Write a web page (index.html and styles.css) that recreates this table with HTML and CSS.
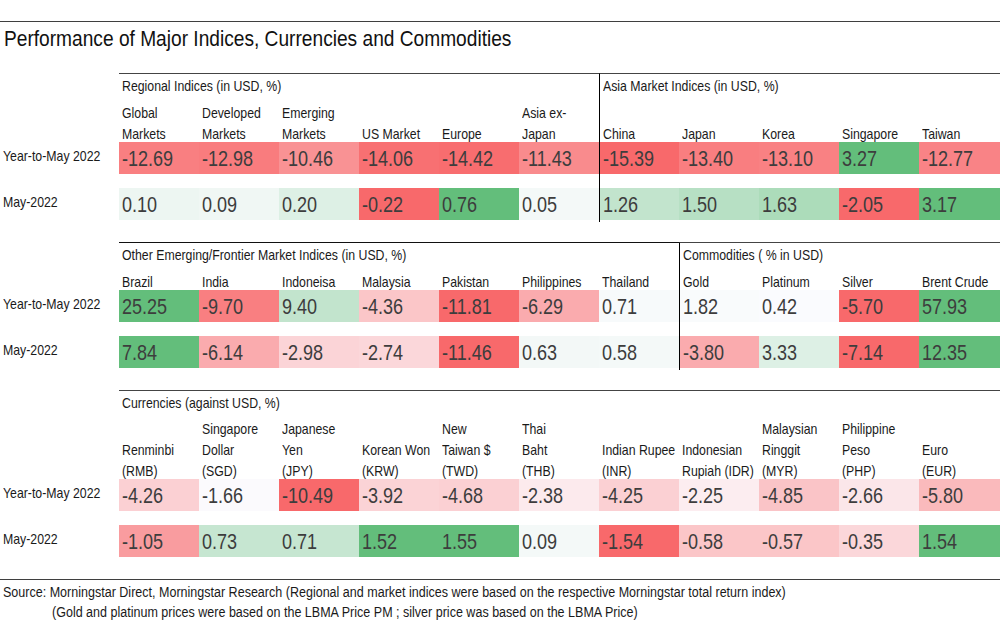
FILE: index.html
```html
<!DOCTYPE html>
<html lang="en">
<head>
<meta charset="utf-8">
<title>Performance of Major Indices, Currencies and Commodities</title>
<link rel="stylesheet" href="styles.css">
</head>
<body>
<div class="page">
  <h1 class="title"><span class="t">Performance of Major Indices, Currencies and Commodities</span></h1>

  <section class="block s1">
    <div class="labels">
      <div class="rl"><span class="t">Year-to-May 2022</span></div>
      <div class="rl r2"><span class="t">May-2022</span></div>
    </div>
    <div class="group c6">
      <div class="gh"><span class="t">Regional Indices (in USD, %)</span></div>
      <div class="ch"><span class="t">Global<br>Markets</span></div>
      <div class="ch"><span class="t">Developed<br>Markets</span></div>
      <div class="ch"><span class="t">Emerging<br>Markets</span></div>
      <div class="ch"><span class="t">US Market</span></div>
      <div class="ch"><span class="t">Europe</span></div>
      <div class="ch"><span class="t">Asia ex-<br>Japan</span></div>
      <div class="n" style="background:rgb(249,127,129)"><span class="t">-12.69</span></div>
      <div class="n" style="background:rgb(249,124,126)"><span class="t">-12.98</span></div>
      <div class="n" style="background:rgb(249,146,148)"><span class="t">-10.46</span></div>
      <div class="n" style="background:rgb(248,112,114)"><span class="t">-14.06</span></div>
      <div class="n" style="background:rgb(248,109,111)"><span class="t">-14.42</span></div>
      <div class="n" style="background:rgb(249,139,141)"><span class="t">-11.43</span></div>
      <div class="n r2" style="background:rgb(237,246,242)"><span class="t">0.10</span></div>
      <div class="n r2" style="background:rgb(240,247,244)"><span class="t">0.09</span></div>
      <div class="n r2" style="background:rgb(221,240,229)"><span class="t">0.20</span></div>
      <div class="n r2" style="background:rgb(248,105,107)"><span class="t">-0.22</span></div>
      <div class="n r2" style="background:rgb(99,190,123)"><span class="t">0.76</span></div>
      <div class="n r2" style="background:rgb(244,249,248)"><span class="t">0.05</span></div>
    </div>
    <div class="group div c5">
      <div class="gh"><span class="t">Asia Market Indices (in USD, %)</span></div>
      <div class="ch"><span class="t">China</span></div>
      <div class="ch"><span class="t">Japan</span></div>
      <div class="ch"><span class="t">Korea</span></div>
      <div class="ch"><span class="t">Singapore</span></div>
      <div class="ch"><span class="t">Taiwan</span></div>
      <div class="n" style="background:rgb(248,105,107)"><span class="t">-15.39</span></div>
      <div class="n" style="background:rgb(249,126,128)"><span class="t">-13.40</span></div>
      <div class="n" style="background:rgb(249,129,131)"><span class="t">-13.10</span></div>
      <div class="n" style="background:rgb(99,190,123)"><span class="t">3.27</span></div>
      <div class="n" style="background:rgb(249,131,134)"><span class="t">-12.77</span></div>
      <div class="n r2" style="background:rgb(194,228,205)"><span class="t">1.26</span></div>
      <div class="n r2" style="background:rgb(183,224,196)"><span class="t">1.50</span></div>
      <div class="n r2" style="background:rgb(172,220,186)"><span class="t">1.63</span></div>
      <div class="n r2" style="background:rgb(248,105,107)"><span class="t">-2.05</span></div>
      <div class="n r2" style="background:rgb(99,190,123)"><span class="t">3.17</span></div>
    </div>
  </section>

  <section class="block s2">
    <div class="labels">
      <div class="rl"><span class="t">Year-to-May 2022</span></div>
      <div class="rl r2"><span class="t">May-2022</span></div>
    </div>
    <div class="group c7 dark">
      <div class="gh"><span class="t">Other Emerging/Frontier Market Indices (in USD, %)</span></div>
      <div class="ch"><span class="t">Brazil</span></div>
      <div class="ch"><span class="t">India</span></div>
      <div class="ch"><span class="t">Indoneisa</span></div>
      <div class="ch"><span class="t">Malaysia</span></div>
      <div class="ch"><span class="t">Pakistan</span></div>
      <div class="ch"><span class="t">Philippines</span></div>
      <div class="ch"><span class="t">Thailand</span></div>
      <div class="n" style="background:rgb(99,190,123)"><span class="t">25.25</span></div>
      <div class="n" style="background:rgb(249,127,129)"><span class="t">-9.70</span></div>
      <div class="n" style="background:rgb(194,228,205)"><span class="t">9.40</span></div>
      <div class="n" style="background:rgb(251,198,200)"><span class="t">-4.36</span></div>
      <div class="n" style="background:rgb(248,105,107)"><span class="t">-11.81</span></div>
      <div class="n" style="background:rgb(250,171,174)"><span class="t">-6.29</span></div>
      <div class="n" style="background:rgb(247,250,251)"><span class="t">0.71</span></div>
      <div class="n r2" style="background:rgb(99,190,123)"><span class="t">7.84</span></div>
      <div class="n r2" style="background:rgb(250,171,174)"><span class="t">-6.14</span></div>
      <div class="n r2" style="background:rgb(251,212,215)"><span class="t">-2.98</span></div>
      <div class="n r2" style="background:rgb(251,215,218)"><span class="t">-2.74</span></div>
      <div class="n r2" style="background:rgb(248,105,107)"><span class="t">-11.46</span></div>
      <div class="n r2" style="background:rgb(243,248,247)"><span class="t">0.63</span></div>
      <div class="n r2" style="background:rgb(244,249,248)"><span class="t">0.58</span></div>
    </div>
    <div class="group div c4">
      <div class="gh"><span class="t">Commodities ( % in USD)</span></div>
      <div class="ch"><span class="t">Gold</span></div>
      <div class="ch"><span class="t">Platinum</span></div>
      <div class="ch"><span class="t">Silver</span></div>
      <div class="ch"><span class="t">Brent Crude</span></div>
      <div class="n" style="background:rgb(249,251,252)"><span class="t">1.82</span></div>
      <div class="n" style="background:rgb(250,251,254)"><span class="t">0.42</span></div>
      <div class="n" style="background:rgb(248,105,107)"><span class="t">-5.70</span></div>
      <div class="n" style="background:rgb(99,190,123)"><span class="t">57.93</span></div>
      <div class="n r2" style="background:rgb(250,171,174)"><span class="t">-3.80</span></div>
      <div class="n r2" style="background:rgb(221,240,229)"><span class="t">3.33</span></div>
      <div class="n r2" style="background:rgb(248,105,107)"><span class="t">-7.14</span></div>
      <div class="n r2" style="background:rgb(99,190,123)"><span class="t">12.35</span></div>
    </div>
  </section>

  <section class="block s3">
    <div class="labels">
      <div class="rl"><span class="t">Year-to-May 2022</span></div>
      <div class="rl r2"><span class="t">May-2022</span></div>
    </div>
    <div class="group c11">
      <div class="gh"><span class="t">Currencies (against USD, %)</span></div>
      <div class="ch"><span class="t">Renminbi<br>(RMB)</span></div>
      <div class="ch"><span class="t">Singapore<br>Dollar<br>(SGD)</span></div>
      <div class="ch"><span class="t">Japanese<br>Yen<br>(JPY)</span></div>
      <div class="ch"><span class="t">Korean Won<br>(KRW)</span></div>
      <div class="ch"><span class="t">New<br>Taiwan $<br>(TWD)</span></div>
      <div class="ch"><span class="t">Thai<br>Baht<br>(THB)</span></div>
      <div class="ch"><span class="t">Indian Rupee<br>(INR)</span></div>
      <div class="ch"><span class="t">Indonesian<br>Rupiah (IDR)</span></div>
      <div class="ch"><span class="t">Malaysian<br>Ringgit<br>(MYR)</span></div>
      <div class="ch"><span class="t">Philippine<br>Peso<br>(PHP)</span></div>
      <div class="ch"><span class="t">Euro<br>(EUR)</span></div>
      <div class="n" style="background:rgb(251,208,211)"><span class="t">-4.26</span></div>
      <div class="n" style="background:rgb(251,250,253)"><span class="t">-1.66</span></div>
      <div class="n" style="background:rgb(248,105,107)"><span class="t">-10.49</span></div>
      <div class="n" style="background:rgb(251,211,214)"><span class="t">-3.92</span></div>
      <div class="n" style="background:rgb(251,208,211)"><span class="t">-4.68</span></div>
      <div class="n" style="background:rgb(252,234,237)"><span class="t">-2.38</span></div>
      <div class="n" style="background:rgb(251,208,211)"><span class="t">-4.25</span></div>
      <div class="n" style="background:rgb(252,237,240)"><span class="t">-2.25</span></div>
      <div class="n" style="background:rgb(250,196,199)"><span class="t">-4.85</span></div>
      <div class="n" style="background:rgb(251,230,233)"><span class="t">-2.66</span></div>
      <div class="n" style="background:rgb(250,186,188)"><span class="t">-5.80</span></div>
      <div class="n r2" style="background:rgb(249,156,159)"><span class="t">-1.05</span></div>
      <div class="n r2" style="background:rgb(198,230,209)"><span class="t">0.73</span></div>
      <div class="n r2" style="background:rgb(198,230,209)"><span class="t">0.71</span></div>
      <div class="n r2" style="background:rgb(99,190,123)"><span class="t">1.52</span></div>
      <div class="n r2" style="background:rgb(99,190,123)"><span class="t">1.55</span></div>
      <div class="n r2" style="background:rgb(244,249,248)"><span class="t">0.09</span></div>
      <div class="n r2" style="background:rgb(248,105,107)"><span class="t">-1.54</span></div>
      <div class="n r2" style="background:rgb(251,198,200)"><span class="t">-0.58</span></div>
      <div class="n r2" style="background:rgb(251,198,200)"><span class="t">-0.57</span></div>
      <div class="n r2" style="background:rgb(251,215,218)"><span class="t">-0.35</span></div>
      <div class="n r2" style="background:rgb(99,190,123)"><span class="t">1.54</span></div>
    </div>
  </section>

  <footer class="source">
    <p><span class="t">Source: Morningstar Direct, Morningstar Research (Regional and market indices were based on the respective Morningstar total return index)</span></p>
    <p class="indent"><span class="t">(Gold and platinum prices were based on the LBMA Price PM ; silver price was based on the LBMA Price)</span></p>
  </footer>
</div>
</body>
</html>
```

FILE: styles.css
```css
* { box-sizing: border-box; }

html, body {
  margin: 0;
  padding: 0;
  background: #ffffff;
}

body {
  font-family: "Liberation Sans", Arial, sans-serif;
  color: #1a1a1a;
  width: 1000px;
  height: 643px;
  overflow: hidden;
}

/* Narrow rendering of Arial-metric text (Arial Narrow is ~82% of Arial) */
.t {
  display: inline-block;
  transform: scaleX(0.82);
  transform-origin: 0 50%;
  white-space: nowrap;
}

.page {
  padding-top: 21px;
}

.title {
  margin: 0;
  border-top: 1px solid #3f3f3f;
  padding: 3px 0 0 4px;
  font-size: 22px;
  line-height: 28px;
  font-weight: normal;
  color: #111;
}

.title .t { transform: scaleX(0.87); }

.block {
  display: flex;
  margin-top: 20px;
}

.s1 { --hh: 48px; }
.s2 { --hh: 27px; }
.s3 { --hh: 68px; }

.labels {
  width: 119px;
  flex: none;
  padding-top: calc(23px + var(--hh));
}

.rl {
  height: 32px;
  padding: 2px 0 0 3px;
  font-size: 15px;
  line-height: 20px;
  white-space: nowrap;
}

.rl.r2 { margin-top: 14px; }

.group {
  display: grid;
  border-top: 1px solid #444;
  align-content: start;
}

.group.dark { border-top-color: #111; }

.group.div {
  border-left: 1px solid #000;
}

.c6 { grid-template-columns: repeat(6, 80px); }
.c5 { grid-template-columns: 79px 80px 80px 80px 81px; }
.c7 { grid-template-columns: repeat(7, 80px); }
.c4 { grid-template-columns: 79px 80px 80px 81px; }
.c11 { grid-template-columns: repeat(10, 80px) 81px; }

.gh {
  grid-column: 1 / -1;
  padding: 2px 0 0 3px;
  font-size: 15px;
  line-height: 20px;
  height: 22px;
  white-space: nowrap;
}

.ch {
  height: var(--hh);
  margin-bottom: -2px;
  display: flex;
  align-items: flex-end;
  padding-left: 3px;
  font-size: 15px;
  line-height: 21px;
  white-space: nowrap;
}

.n {
  height: 32px;
  padding: 1px 0 0 3px;
  font-size: 22px;
  line-height: 32px;
  color: #3d3d3d;
  white-space: nowrap;
  overflow: hidden;
}

.n.r2 { margin-top: 14px; }

.source {
  margin-top: 20px;
  border-top: 1px solid #3f3f3f;
  padding: 2px 0 0 3px;
  font-size: 14px;
  line-height: 20px;
  color: #1a1a1a;
}

.source .t { transform: scaleX(0.895); }

.source p {
  margin: 0;
  white-space: nowrap;
}

.source .indent {
  padding-left: 49px;
}
```
